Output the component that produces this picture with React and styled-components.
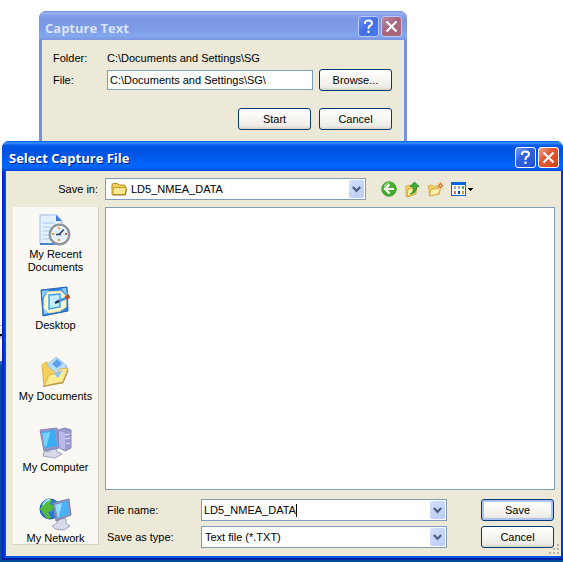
import React from "react"
import styled, { createGlobalStyle, css } from "styled-components"

const uiFont = `"Liberation Sans", Arial, sans-serif`
const titleFont = `"Open Sans", "Noto Sans", sans-serif`

const face = "#ece9d8"
const fieldBorder = "#7f9db9"

const GlobalStyle = createGlobalStyle`
  * {
    box-sizing: border-box;
  }

  body {
    margin: 0;
    background: #fff;
    color: #000;
    font-family: ${uiFont};
    font-size: 11px;
    line-height: 13px;
  }

  button,
  input,
  select {
    font: inherit;
    color: inherit;
  }
`

const Desktop = styled.main`
  min-height: 100vh;
  padding-top: 11px;
  background: linear-gradient(
    #fff 325px,
    #aca899 325px,
    #aca899 326px,
    #fff 326px,
    #ece9d8 334px,
    #000 334px,
    #000 336px,
    #aca899 336px,
    #fff 340px,
    #ece9d8 361px,
    #5a6fd0 361px,
    #004e98 366px
  );
  overflow: hidden;
`

const Window = styled.section`
  padding: 0 3px;
  border-radius: 7px 7px 0 0;
  background: #7a8fe0;

  ${props =>
    props.$active &&
    css`
      padding: 0 2px 4px 4px;
      background: linear-gradient(90deg, #0019cf, #0855dd 4px, #0855dd 99%, #0030d0);
      box-shadow: inset 0 -2px #001ea0;
    `}
`

const CaptureWindow = styled(Window)`
  margin: 0 156px 0 39px;
`

const SelectWindow = styled(Window)`
  margin-left: 2px;
`

const TitleBar = styled.header`
  display: flex;
  align-items: center;
  gap: 2px;
  height: 29px;
  margin: 0 -3px;
  padding: 2px 5px 0 6px;
  border-radius: 7px 7px 0 0;
  color: #d8e4f8;
  background: linear-gradient(
    #7088dc,
    #9db4f0 2px,
    #8aa2e8 4px,
    #7b96e1 8px,
    #7e9ce6 18px,
    #83a9ee 25px,
    #7b93df
  );

  ${props =>
    props.$active &&
    css`
      height: 30px;
      margin: 0 -2px 0 -4px;
      padding: 2px 4px 0 7px;
      color: #fff;
      text-shadow: 1px 1px #0a1883;
      background: linear-gradient(
        #0058e6,
        #3a93ff 2px,
        #0a5cee 4px,
        #0053e1 8px,
        #0055e5 14px,
        #0066ff 24px,
        #0062f6 27px,
        #0043cf
      );
    `}
`

const Title = styled.h1`
  flex: 1;
  margin: 0;
  padding-top: 2px;
  font: 700 13px/16px ${titleFont};
`

const CaptionButton = styled.button`
  width: 21px;
  height: 21px;
  padding: 0;
  border: 1px solid ${props => (props.$active ? "#fff" : "#b9c9f4")};
  border-radius: 3px;
  background: ${props =>
    props.$active
      ? "linear-gradient(135deg, #7da0f2, #3062dd 40%, #2a58d8 80%, #1c46c0)"
      : "linear-gradient(135deg, #6c91ef, #426ee5 50%, #4a7af0)"};

  svg {
    display: block;
  }
`

const CloseButton = styled(CaptionButton)`
  background: ${props =>
    props.$active
      ? "linear-gradient(135deg, #f0a58c, #e05a34 40%, #dc4a20 80%, #b83a12)"
      : "linear-gradient(135deg, #b98ba8, #a8647c 50%, #ad687a)"};
`

const CaptureForm = styled.form`
  padding: 12px 12px 11px 11px;
  background: ${face};
`

const CaptureRow = styled.div`
  display: flex;
  align-items: center;
  gap: 6px;
  margin-bottom: 4px;

  > :first-child {
    width: 48px;
  }
`

const TextInput = styled.input`
  flex: 1;
  min-width: 0;
  height: 20px;
  padding: 0 2px;
  border: 1px solid ${fieldBorder};
  background: #fff;
  outline: none;
`

const Button = styled.button`
  width: 73px;
  height: 22px;
  padding: 0;
  border: 1px solid #003c74;
  border-radius: 3px;
  background: linear-gradient(#fff, #f4f3ee 60%, #ecebe5 85%, #d6d0c5);

  ${props =>
    props.$default &&
    css`
      box-shadow: inset 0 0 0 2px #a9c3f3;
    `}
`

const CaptureActions = styled.div`
  display: flex;
  justify-content: flex-end;
  gap: 8px;
  margin-top: 17px;
`

const SelectForm = styled.form`
  padding: 7px 6px 8px 7px;
  background: ${face};
`

const LookInRow = styled.div`
  display: flex;
  align-items: center;

  label {
    width: 92px;
    padding-right: 7px;
    text-align: right;
  }
`

const Combo = styled.div`
  display: flex;
  flex: 1;
  align-items: center;
  min-width: 0;
  height: 22px;
  padding: 1px;
  border: 1px solid ${fieldBorder};
  background: #fff;

  select,
  input {
    min-width: 0;
    height: 18px;
    border: 0;
    background: none;
    outline: none;
    appearance: none;
  }

  select {
    flex: 1;
    padding: 0 2px;
  }

  input {
    field-sizing: content;
    padding: 0 0 0 1px;
  }
`

const FolderCombo = styled(Combo)`
  gap: 2px;
  padding-left: 5px;
`

const Caret = styled.span`
  width: 1px;
  height: 13px;
  background: #000;
`

const DropArrow = styled.span`
  display: flex;
  flex: none;
  align-items: center;
  justify-content: center;
  width: 15px;
  height: 18px;
  margin-left: auto;
  border-radius: 2px;
  background: linear-gradient(135deg, #d3e0fc, #b9cbf3);
`

const DropButton = styled(DropArrow).attrs({ as: "button", type: "button" })`
  padding: 0;
  border: 0;
`

const Toolbar = styled.div`
  display: flex;
  align-items: center;
  gap: 7px;
  width: 189px;
  padding-left: 15px;
`

const ToolButton = styled.button`
  height: 18px;
  padding: 0;
  border: 0;
  background: none;

  svg {
    display: block;
  }
`

const Columns = styled.div`
  display: flex;
  gap: 6px;
  margin-top: 7px;
`

const Places = styled.nav`
  display: flex;
  flex: none;
  flex-direction: column;
  width: 86px;
  height: 338px;
  padding-top: 6px;
  border-right: 1px solid #d5d2c4;
  border-bottom: 1px solid #d5d2c4;
  background: #f9f8f3;
  overflow: hidden;
`

const Place = styled.a`
  display: flex;
  flex: none;
  flex-direction: column;
  align-items: center;
  height: 71px;
  color: #000;
  text-align: center;
  text-decoration: none;

  span {
    width: 76px;
    margin-top: 1px;
  }
`

const Main = styled.div`
  flex: 1;
  min-width: 0;
`

const FileList = styled.div`
  height: 283px;
  border: 1px solid ${fieldBorder};
  background: #fff;
`

const Fields = styled.div`
  display: grid;
  grid-template-columns: 90px 1fr 73px;
  row-gap: 5px;
  align-items: center;
  margin-top: 9px;
  padding: 0 1px 0 2px;

  ${Combo} {
    margin: 0 34px 0 4px;
  }
`

const Grip = styled.svg`
  display: block;
  float: right;
  margin: -4px -5px -11px 0;
`

const Help = () => (
  <svg width="19" height="19" viewBox="0 0 19 19" fill="none" stroke="#fff" strokeWidth="2">
    <path d="M6 7V5.5Q6.5 3.5 9.5 3.5Q13 3.5 13 6Q13 8 10.5 9Q9.5 9.5 9.5 12" />
    <path d="M9.5 13.5v2.5" />
  </svg>
)

const Close = () => (
  <svg width="19" height="19" viewBox="0 0 19 19" stroke="#fff" strokeWidth="2.2">
    <path d="M4.5 4.5l10 10M14.5 4.5l-10 10" />
  </svg>
)

const Chevron = () => (
  <svg width="9" height="7" viewBox="0 0 9 7" fill="none" stroke="#4d6185" strokeWidth="2.2">
    <path d="M.8 1l3.7 3.8L8.2 1" />
  </svg>
)

const FolderIcon = () => (
  <svg width="16" height="16" viewBox="0 0 16 16">
    <path d="M1 4L2 2.5h4.5L8 4h5.5l1 1v8.5H1z" fill="#f5cf63" stroke="#b88a20" />
    <path d="M2.5 6.5h12.7L14 13.5H1.5z" fill="#ffe88f" stroke="#c99a2c" />
    <path d="M1.5 14h13l1-6" fill="none" stroke="#9b7623" />
  </svg>
)

const BackIcon = () => (
  <svg width="16" height="18" viewBox="0 0 16 18">
    <circle cx="8" cy="9" r="7.3" fill="#43ac2e" stroke="#4ba53c" />
    <path d="M2.5 6Q5 2 9.5 2.7Q6 4 4 7.5z" fill="#8ed87a" />
    <path d="M8.5 4.5L4 9l4.5 4.5M4.5 9H13" fill="none" stroke="#fff" strokeWidth="2.2" />
  </svg>
)

const UpIcon = () => (
  <svg width="16" height="18" viewBox="0 0 16 18">
    <path d="M2 6l4-1 1 1 5-1v9l-9 3-1-1z" fill="#f4d36c" stroke="#d9b04a" />
    <path d="M4 9l9-2-2 7-8 2.5z" fill="#fff0a2" stroke="#d5a83a" />
    <path d="M6 14Q10 13 9 6.5H6L10.5 2L15 6.5h-2.5Q13 13 6 14z" fill="#3bad35" stroke="#228424" strokeWidth=".8" />
  </svg>
)

const NewFolderIcon = () => (
  <svg width="17" height="18" viewBox="0 0 17 18">
    <path d="M1.5 5.5l4-.5 1 1.5 6-1V14l-10 2z" fill="#f4cf69" stroke="#dfb355" />
    <path d="M4 9.5l10-2-2.5 6.5-9 2z" fill="#fff1a6" stroke="#d8a744" />
    <path d="M13.5 2.5v6M10.5 5.5h6M11.5 3.5l4 4M15.5 3.5l-4 4" stroke="#e08a55" />
    <circle cx="13.5" cy="5.5" r="1.5" fill="#ffe18a" stroke="#d5481e" />
  </svg>
)

const ViewsIcon = () => (
  <svg width="24" height="18" viewBox="0 0 24 18" shapeRendering="crispEdges">
    <path d="M0 2h15v14H0z" fill="#0d66d6" />
    <path d="M1 5h13v10H1z" fill="#fff" />
    <path d="M3 6h2v3H3zM7 6h2v3H7z" fill="#aaa5c7" />
    <path d="M11 6h2v3h-2z" fill="#53ac50" />
    <path d="M3 11h2v3H3z" fill="#e26a54" />
    <path d="M7 11h2v3H7z" fill="#153da9" />
    <path d="M11 11h2v3h-2z" fill="#d0a21d" />
    <path d="M17 8h5v1h-1v1h-1v1h-1v-1h-1V9h-1z" fill="#000" />
  </svg>
)

const RecentIcon = () => (
  <svg width="34" height="34" viewBox="0 0 34 34">
    <path d="M1 2h17l5 6v23H1z" fill="#e3efff" stroke="#9dbdea" />
    <path d="M17 2v6h6z" fill="#3e7bd1" />
    <path d="M4 10h12M4 14h8M4 18h7M4 22h7M4 26h8" stroke="#a9c8f2" />
    <path d="M1 31h22" stroke="#4f80c8" strokeWidth="2" />
    <circle cx="20.5" cy="21.5" r="9.6" fill="#cce4fb" stroke="#8f959f" strokeWidth="2.6" />
    <circle cx="20.5" cy="21.5" r="7.8" fill="#dceefe" stroke="#fff" strokeWidth="1.2" />
    <path d="M20 21.5l5-5M17 21.5h5" stroke="#36435e" strokeWidth="1.6" />
    <path d="M20 14v2M20 26v2M13 21h2" stroke="#e19a30" strokeWidth="2" />
    <path d="M26 21h2" stroke="#e44c2a" strokeWidth="2" />
  </svg>
)

const DesktopIcon = () => (
  <svg width="34" height="34" viewBox="0 0 34 34">
    <path d="M2 6l26-3 1 24-25 5z" fill="#2d82df" stroke="#2467b4" />
    <path d="M3 7l7-1-7 8zM22 4.5l5-.5 1 8zM4 22l6 7-5 1z" fill="#8dceff" />
    <path d="M9 8l13-1 5 5v11l-6 4-11 2-5-5V14z" fill="#fff6c9" stroke="#f0e2ac" />
    <path d="M10 11l11-1v13l-11 2z" fill="#c6ebff" stroke="#37a2e8" strokeWidth="1.4" />
    <path d="M18 18l9-4" stroke="#4b98d8" strokeWidth="3" />
    <path d="M26.5 14l4-2" stroke="#bf4a23" strokeWidth="4" />
    <path d="M16 19l4-2" stroke="#17304c" strokeWidth="2" />
  </svg>
)

const DocumentsIcon = () => (
  <svg width="34" height="34" viewBox="0 0 34 34">
    <path d="M3 10l4-3 4 2 2 4 12-2 4 3-5 14-19 3z" fill="#f7cf5b" stroke="#dcb550" />
    <path d="M8 10L17 2l11 9-8 10z" fill="#b8dcff" stroke="#9fbfe8" />
    <path d="M13 9l5-5 5 5-5 4z" fill="#5d9ff0" />
    <path d="M5 31l5-11 8-2 3-4 8-1-5 14z" fill="#ffeb92" stroke="#dbb24d" />
    <path d="M15 19l9-4-5 8z" fill="#8bc6f6" />
    <path d="M4 31.5l20-4 5-12" fill="none" stroke="#ae975a" />
  </svg>
)

const ComputerIcon = () => (
  <svg width="34" height="34" viewBox="0 0 34 34">
    <path d="M19 4l7-2 6 2v18l-6 3-7-4z" fill="#9a9bd0" stroke="#8286b4" />
    <path d="M20 5l6 2v17l-6-3z" fill="#bbbbea" />
    <path d="M26 9l5-1M26 13l5-1M27 18l4-1" stroke="#e3e5ff" />
    <path d="M10 22l7 1 1 3 5 2-7 4-12-2 1-4 6-1z" fill="#d7d9e9" stroke="#a2a5bd" />
    <path d="M1 4l17-2 2 20-15 3z" fill="#9295c8" stroke="#8186b8" />
    <path d="M3 6l13-2 2 16-12 2z" fill="#35aef4" />
    <path d="M3.5 7l8-1-4 14-2 1z" fill="#78d2ff" />
  </svg>
)

const NetworkIcon = () => (
  <svg width="34" height="34" viewBox="0 0 34 34">
    <circle cx="11" cy="12" r="10" fill="#2877d8" stroke="#155aac" />
    <path d="M5 5q5-5 8-2l-2 4 4 2-2 5-4 1 3 6-4 1-4-6-3-4z" fill="#55b83f" />
    <path d="M4 8q2-5 7-5" fill="none" stroke="#9be7ff" strokeWidth="2" />
    <path d="M20 21l7 1v4l4 3-6 4-9-1-3-3 5-3z" fill="#d9dbea" stroke="#a2a5bd" />
    <path d="M14 6l16-4 2 16-15 6z" fill="#8a91c3" stroke="#7a82ad" />
    <path d="M16 8l12-4 2 13-11 4z" fill="#45b4f4" />
    <path d="M16 8l7-2-3 14-1 1z" fill="#93ddff" />
  </svg>
)

const places = [
  { name: "My Recent Documents", icon: <RecentIcon /> },
  { name: "Desktop", icon: <DesktopIcon /> },
  { name: "My Documents", icon: <DocumentsIcon /> },
  { name: "My Computer", icon: <ComputerIcon /> },
  { name: "My Network", icon: <NetworkIcon /> },
]

const Caption = ({ title, active }) => (
  <TitleBar $active={active}>
    <Title>{title}</Title>
    <CaptionButton type="button" aria-label="Help" $active={active}>
      <Help />
    </CaptionButton>
    <CloseButton type="button" aria-label="Close" $active={active}>
      <Close />
    </CloseButton>
  </TitleBar>
)

const CaptureText = () => (
  <CaptureWindow>
    <Caption title="Capture Text" />
    <CaptureForm onSubmit={e => e.preventDefault()}>
      <CaptureRow>
        <span>Folder:</span>
        <span>C:\Documents and Settings\SG</span>
      </CaptureRow>
      <CaptureRow>
        <label htmlFor="capture-file">File:</label>
        <TextInput id="capture-file" defaultValue={"C:\\Documents and Settings\\SG\\"} />
        <Button type="button">Browse...</Button>
      </CaptureRow>
      <CaptureActions>
        <Button>Start</Button>
        <Button type="button">Cancel</Button>
      </CaptureActions>
    </CaptureForm>
  </CaptureWindow>
)

const SelectCaptureFile = () => (
  <SelectWindow $active>
    <Caption title="Select Capture File" active />
    <SelectForm onSubmit={e => e.preventDefault()}>
      <LookInRow>
        <label htmlFor="save-in">Save in:</label>
        <FolderCombo>
          <FolderIcon />
          <select id="save-in">
            <option>LD5_NMEA_DATA</option>
          </select>
          <DropArrow>
            <Chevron />
          </DropArrow>
        </FolderCombo>
        <Toolbar>
          <ToolButton type="button" aria-label="Back">
            <BackIcon />
          </ToolButton>
          <ToolButton type="button" aria-label="Up one level">
            <UpIcon />
          </ToolButton>
          <ToolButton type="button" aria-label="New folder">
            <NewFolderIcon />
          </ToolButton>
          <ToolButton type="button" aria-label="Views">
            <ViewsIcon />
          </ToolButton>
        </Toolbar>
      </LookInRow>

      <Columns>
        <Places>
          {places.map(place => (
            <Place key={place.name} href="#">
              {place.icon}
              <span>{place.name}</span>
            </Place>
          ))}
        </Places>
        <Main>
          <FileList />
          <Fields>
            <label htmlFor="file-name">File name:</label>
            <Combo>
              <input id="file-name" defaultValue="LD5_NMEA_DATA" />
              <Caret />
              <DropButton aria-label="Recent names">
                <Chevron />
              </DropButton>
            </Combo>
            <Button $default>Save</Button>
            <label htmlFor="file-type">Save as type:</label>
            <Combo>
              <select id="file-type">
                <option>Text file (*.TXT)</option>
              </select>
              <DropArrow>
                <Chevron />
              </DropArrow>
            </Combo>
            <Button type="button">Cancel</Button>
          </Fields>
          <Grip width="11" height="11" viewBox="0 0 11 11" fill="#b8b4a2">
            <path d="M8 0h2v2H8zM4 4h2v2H4zM8 4h2v2H8zM0 8h2v2H0zM4 8h2v2H4zM8 8h2v2H8z" />
          </Grip>
        </Main>
      </Columns>
    </SelectForm>
  </SelectWindow>
)

const App = () => (
  <>
    <GlobalStyle />
    <Desktop>
      <CaptureText />
      <SelectCaptureFile />
    </Desktop>
  </>
)

export default App
